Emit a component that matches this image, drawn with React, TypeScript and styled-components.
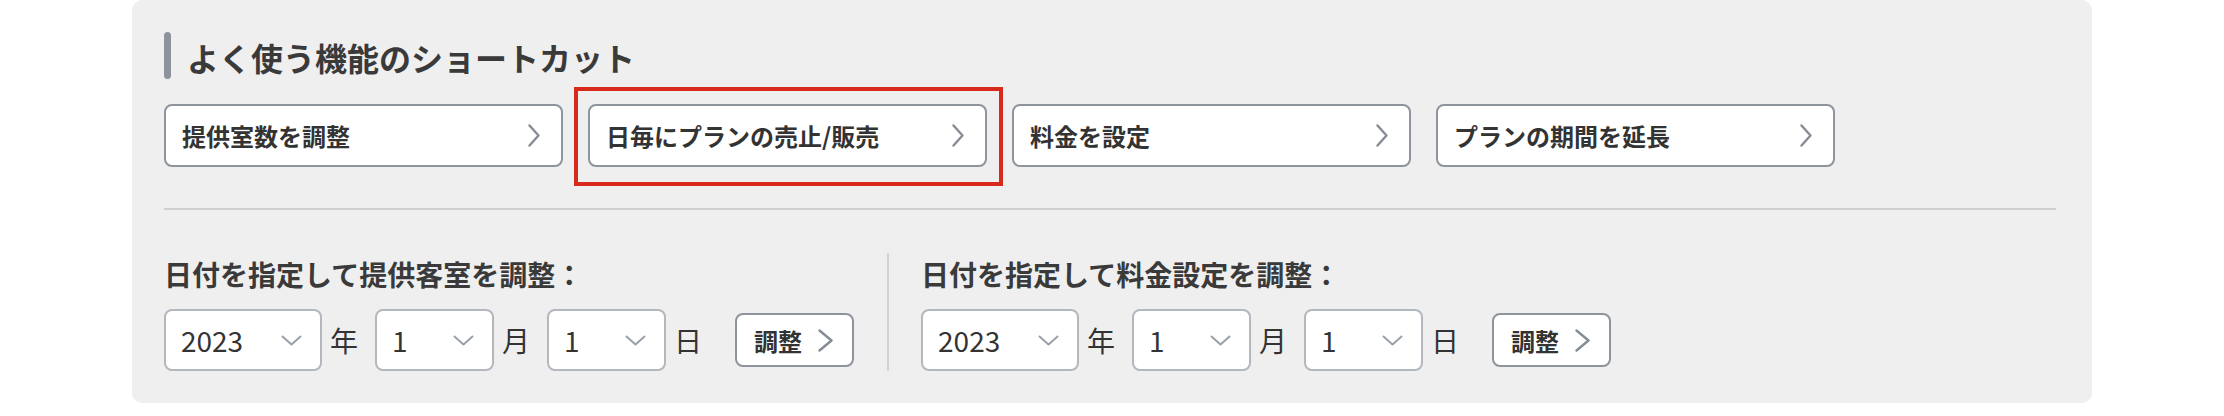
import React from "react";
import styled, { createGlobalStyle } from "styled-components";

const GlobalStyle = createGlobalStyle`
  html, body {
    margin: 0;
    padding: 0;
    background: #ffffff;
  }
  body {
    font-family: "Noto Sans CJK JP", "Noto Sans", sans-serif;
    color: #333333;
  }
`;

const Panel = styled.section`
  box-sizing: border-box;
  width: 1960px;
  margin: 0 auto;
  background: #efefef;
  border-radius: 10px;
  padding: 32px 36px 32px 32px;
`;

const Heading = styled.h2`
  display: flex;
  align-items: center;
  gap: 16px;
  height: 47px;
  margin: 0;
  font-size: 32px;
  font-weight: 700;
  color: #3a3a3a;
  line-height: 1;
  &::before {
    content: "";
    display: block;
    width: 7px;
    height: 47px;
    border-radius: 4px;
    background: #8c939c;
  }
`;

const HeadingText = styled.span`
  padding-top: 2px;
`;

const ShortcutRow = styled.div`
  display: flex;
  gap: 25px;
  margin-top: 25px;
`;

const ShortcutButton = styled.button<{ $highlight?: boolean }>`
  position: relative;
  box-sizing: border-box;
  display: flex;
  align-items: center;
  justify-content: space-between;
  width: 399px;
  height: 63px;
  padding: 0 21px 0 16px;
  background: #ffffff;
  border: 2px solid #8e949c;
  border-radius: 8px;
  font-family: inherit;
  font-size: 24px;
  font-weight: 700;
  color: #333333;
  cursor: pointer;
  ${(p) =>
    p.$highlight &&
    `
    &::after {
      content: "";
      position: absolute;
      left: -16px;
      right: -18px;
      top: -19px;
      bottom: -21px;
      border: 4px solid #d72a1c;
      pointer-events: none;
    }
  `}
`;

const Divider = styled.hr`
  margin: 41px 0 0 0;
  border: none;
  height: 2px;
  background: #cfcfcf;
`;

const DateSection = styled.div`
  display: flex;
  margin-top: 43px;
`;

const DateGroup = styled.div<{ $divided?: boolean }>`
  display: flex;
  flex-direction: column;
  gap: 14px;
  ${(p) =>
    p.$divided &&
    `
    margin-left: 33px;
    padding-left: 32px;
    border-left: 2px solid #d2d2d2;
  `}
`;

const DateLabel = styled.div`
  font-size: 28px;
  font-weight: 700;
  line-height: 42px;
  color: #3a3a3a;
`;

const DateRow = styled.div`
  display: flex;
  align-items: center;
`;

const SelectBox = styled.div<{ $width: number }>`
  box-sizing: border-box;
  display: flex;
  align-items: center;
  justify-content: space-between;
  width: ${(p) => p.$width}px;
  height: 62px;
  padding: 0 18px 0 15px;
  background: #ffffff;
  border: 2px solid #b3b8bf;
  border-radius: 8px;
  font-size: 28px;
  font-weight: 400;
  color: #333333;
`;

const Unit = styled.span`
  margin: 0 17px 0 8px;
  font-size: 28px;
  font-weight: 400;
  color: #333333;
`;

const AdjustButton = styled.button`
  box-sizing: border-box;
  display: flex;
  align-items: center;
  gap: 16px;
  height: 54px;
  width: 119px;
  margin-left: 16px;
  padding: 0 0 0 17px;
  background: #ffffff;
  border: 2px solid #8e949c;
  border-radius: 8px;
  font-family: inherit;
  font-size: 24px;
  font-weight: 700;
  color: #333333;
  cursor: pointer;
`;

const ChevronRight = ({ w = 12, h = 23 }: { w?: number; h?: number }) => (
  <svg width={w} height={h} viewBox={`0 0 ${w} ${h}`} fill="none">
    <path
      d={`M1.5 1.5 L${w - 1.5} ${h / 2} L1.5 ${h - 1.5}`}
      stroke="#868c95"
      strokeWidth="2.4"
      strokeLinecap="round"
      strokeLinejoin="round"
    />
  </svg>
);

const ChevronDown = () => (
  <svg width="21" height="11" viewBox="0 0 21 11" fill="none">
    <path
      d="M1.5 1.5 L10.5 9.5 L19.5 1.5"
      stroke="#9aa0a8"
      strokeWidth="2"
      strokeLinecap="round"
      strokeLinejoin="round"
    />
  </svg>
);

const shortcuts = [
  "提供室数を調整",
  "日毎にプランの売止/販売",
  "料金を設定",
  "プランの期間を延長",
];

const Select = ({ value, width }: { value: string; width: number }) => (
  <SelectBox $width={width}>
    <span>{value}</span>
    <ChevronDown />
  </SelectBox>
);

const DatePicker = ({ label, divided }: { label: string; divided?: boolean }) => (
  <DateGroup $divided={divided}>
    <DateLabel>{label}</DateLabel>
    <DateRow>
      <Select value="2023" width={158} />
      <Unit>年</Unit>
      <Select value="1" width={119} />
      <Unit>月</Unit>
      <Select value="1" width={119} />
      <Unit>日</Unit>
      <AdjustButton>
        調整
        <ChevronRight w={15} h={23} />
      </AdjustButton>
    </DateRow>
  </DateGroup>
);

export default function App() {
  return (
    <>
      <GlobalStyle />
      <Panel>
        <Heading>
          <HeadingText>よく使う機能のショートカット</HeadingText>
        </Heading>
        <ShortcutRow>
          {shortcuts.map((s, i) => (
            <ShortcutButton key={s} $highlight={i === 1}>
              <span>{s}</span>
              <ChevronRight />
            </ShortcutButton>
          ))}
        </ShortcutRow>
        <Divider />
        <DateSection>
          <DatePicker label="日付を指定して提供客室を調整：" />
          <DatePicker label="日付を指定して料金設定を調整：" divided />
        </DateSection>
      </Panel>
    </>
  );
}
